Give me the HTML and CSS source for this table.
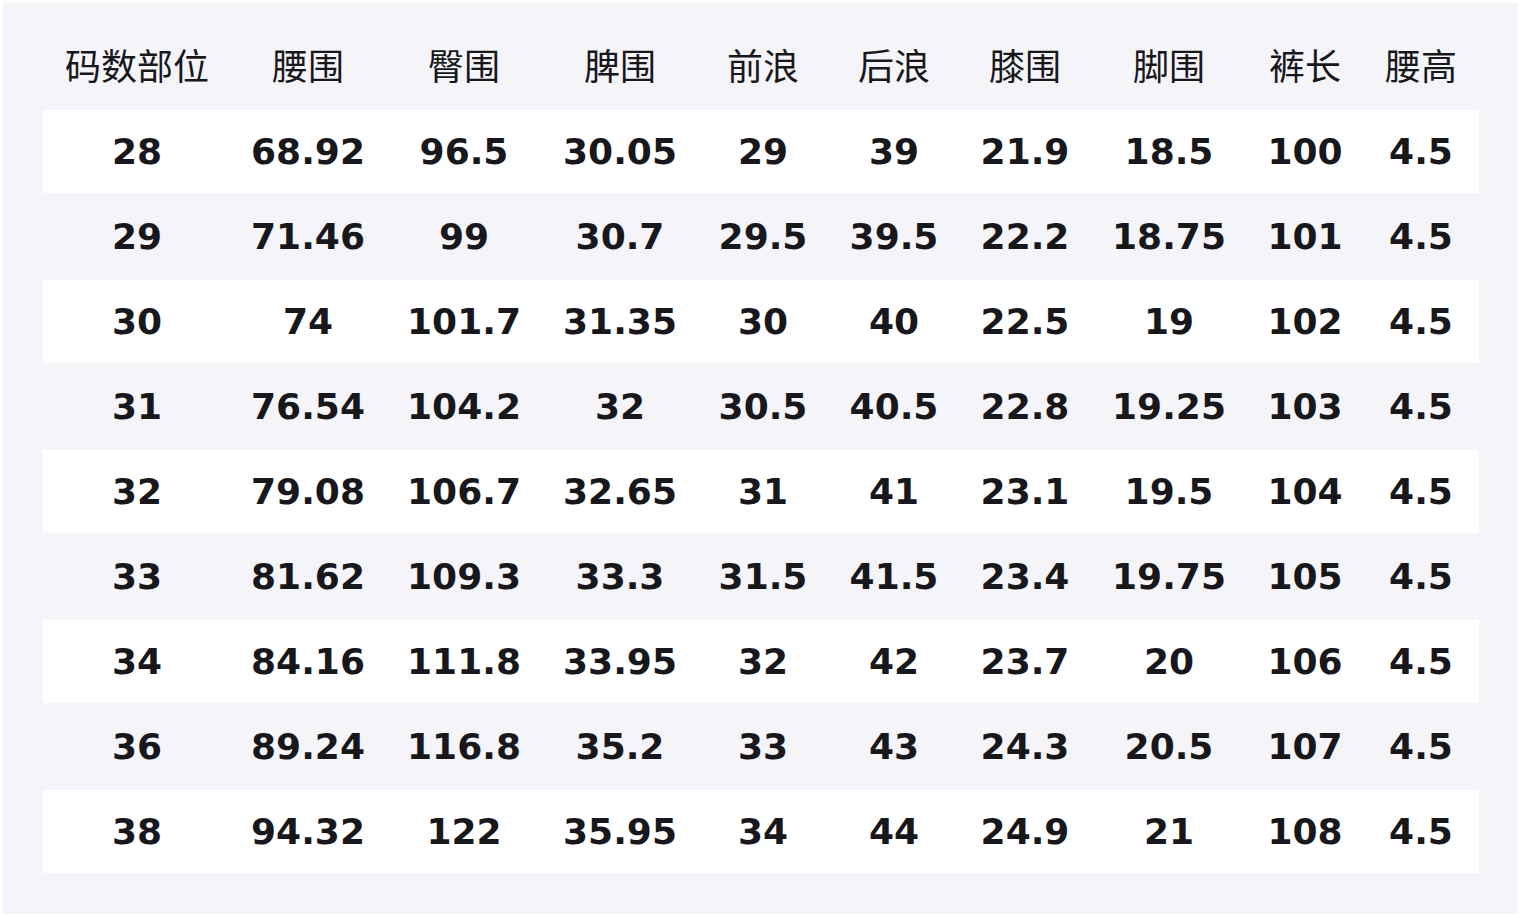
FILE: index.html
```html
<!DOCTYPE html>
<html lang="zh">
<head>
<meta charset="utf-8">
<link rel="stylesheet" href="styles.css">
</head>
<body>
<div class="panel">
  <div class="table">
    <div class="row head"><div>码数部位</div><div>腰围</div><div>臀围</div><div>脾围</div><div>前浪</div><div>后浪</div><div>膝围</div><div>脚围</div><div>裤长</div><div>腰高</div></div>
    <div class="row light"><div>28</div><div>68.92</div><div>96.5</div><div>30.05</div><div>29</div><div>39</div><div>21.9</div><div>18.5</div><div>100</div><div>4.5</div></div>
    <div class="row dark"><div>29</div><div>71.46</div><div>99</div><div>30.7</div><div>29.5</div><div>39.5</div><div>22.2</div><div>18.75</div><div>101</div><div>4.5</div></div>
    <div class="row light"><div>30</div><div>74</div><div>101.7</div><div>31.35</div><div>30</div><div>40</div><div>22.5</div><div>19</div><div>102</div><div>4.5</div></div>
    <div class="row dark"><div>31</div><div>76.54</div><div>104.2</div><div>32</div><div>30.5</div><div>40.5</div><div>22.8</div><div>19.25</div><div>103</div><div>4.5</div></div>
    <div class="row light"><div>32</div><div>79.08</div><div>106.7</div><div>32.65</div><div>31</div><div>41</div><div>23.1</div><div>19.5</div><div>104</div><div>4.5</div></div>
    <div class="row dark"><div>33</div><div>81.62</div><div>109.3</div><div>33.3</div><div>31.5</div><div>41.5</div><div>23.4</div><div>19.75</div><div>105</div><div>4.5</div></div>
    <div class="row light"><div>34</div><div>84.16</div><div>111.8</div><div>33.95</div><div>32</div><div>42</div><div>23.7</div><div>20</div><div>106</div><div>4.5</div></div>
    <div class="row dark"><div>36</div><div>89.24</div><div>116.8</div><div>35.2</div><div>33</div><div>43</div><div>24.3</div><div>20.5</div><div>107</div><div>4.5</div></div>
    <div class="row light"><div>38</div><div>94.32</div><div>122</div><div>35.95</div><div>34</div><div>44</div><div>24.9</div><div>21</div><div>108</div><div>4.5</div></div>
  </div>
</div>
</body>
</html>
```
FILE: styles.css
```css
html, body {
  margin: 0;
  padding: 0;
  background: #ffffff;
}
body {
  padding: 3px;
}
.panel {
  width: 1515px;
  height: 911px;
  box-sizing: border-box;
  background: #f4f4f9;
  padding: 24px 39px 0 40px;
  color: #17171c;
}
.table {
  display: flex;
  flex-direction: column;
}
.row {
  display: grid;
  grid-template-columns: 188px 154px 158px 154px 132px 130px 132px 156px 116px 116px;
  align-items: center;
  justify-items: center;
}
.row > div {
  white-space: nowrap;
}
.head {
  height: 83px;
  font-family: "Noto Sans CJK SC", "Noto Sans", sans-serif;
  font-size: 36px;
  font-weight: 400;
}
.head > div {
  transform: translateY(-5px);
}
.light, .dark {
  font-family: "DejaVu Sans", "Liberation Sans", sans-serif;
  font-weight: 700;
  font-size: 36px;
}
.light {
  height: 83px;
  background: #ffffff;
}
.dark {
  height: 87px;
  background: #f4f4f9;
}
```
